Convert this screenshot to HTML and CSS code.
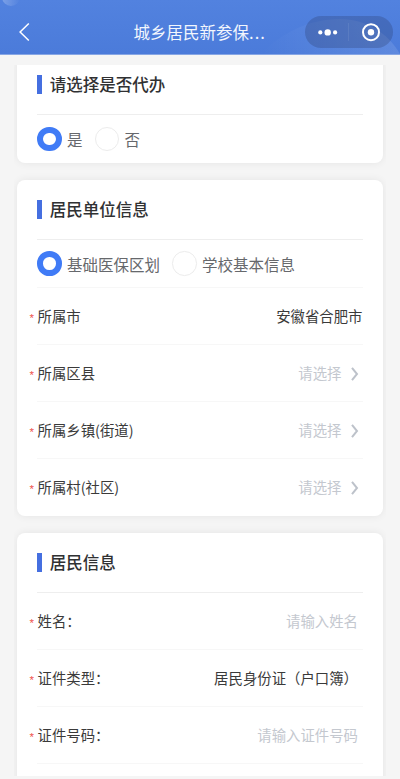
FILE: index.html
```html
<!DOCTYPE html>
<html lang="zh-CN">
<head>
<meta charset="utf-8">
<title>城乡居民新参保</title>
<link rel="stylesheet" href="styles.css">
</head>
<body>
<header class="nav">
  <svg class="nav-bg" width="400" height="54" viewBox="0 0 400 54">
    <defs>
      <linearGradient id="orb" x1="0" y1="0" x2="1" y2="0"><stop offset="0" stop-color="#fff" stop-opacity=".24"/><stop offset="1" stop-color="#fff" stop-opacity="0"/></linearGradient>
      <linearGradient id="arc" x1="0" y1="0" x2="1" y2="0"><stop offset="0" stop-color="#fff" stop-opacity="0"/><stop offset="1" stop-color="#fff" stop-opacity=".11"/></linearGradient>
    </defs>
    <circle cx="11" cy="-3" r="9" fill="url(#orb)"/>
    <path d="M261 54C280 34 308 19 340 19C366 19 388 33 400 54Z" fill="url(#arc)"/>
  </svg>
  <svg class="back" width="12" height="20" viewBox="0 0 12 20"><path d="M9.8 1.5L1.1 10l8.7 8.5" fill="none" stroke="#fff" stroke-width="1.5"/></svg>
  <h1 class="nav-title">城乡居民新参保<span class="dots">...</span></h1>
  <div class="capsule">
    <svg width="88" height="32" viewBox="0 0 88 32">
      <g fill="#fff"><circle cx="15.3" cy="16.4" r="2.1"/><circle cx="22.7" cy="16.4" r="3.2"/><circle cx="30.1" cy="16.4" r="2.1"/><circle cx="66" cy="16.2" r="3.2"/></g>
      <path d="M43.5 7v18" stroke="#fff" stroke-opacity=".08"/>
      <circle cx="66" cy="16.2" r="8" fill="none" stroke="#fff" stroke-width="2"/>
    </svg>
  </div>
</header>
<main class="scroll">
  <section class="card card-first">
    <h2 class="title"><span>请选择是否代办</span></h2>
    <div class="radios">
      <span class="radio on"></span><span class="radio-text">是</span>
      <span class="radio"></span><span class="radio-text">否</span>
    </div>
  </section>
  <section class="card">
    <h2 class="title"><span>居民单位信息</span></h2>
    <div class="radios lined">
      <span class="radio on"></span><span class="radio-text">基础医保区划</span>
      <span class="radio"></span><span class="radio-text">学校基本信息</span>
    </div>
    <div class="row"><i>*</i><span class="label">所属市</span><span class="value">安徽省合肥市</span></div>
    <div class="row"><i>*</i><span class="label">所属区县</span><span class="value hint pick">请选择</span><svg class="chev" width="8" height="14" viewBox="0 0 8 14"><path d="M1 .8L6 7l-5 6.2" /></svg></div>
    <div class="row"><i>*</i><span class="label">所属乡镇(街道)</span><span class="value hint pick">请选择</span><svg class="chev" width="8" height="14" viewBox="0 0 8 14"><path d="M1 .8L6 7l-5 6.2" /></svg></div>
    <div class="row last"><i>*</i><span class="label">所属村(社区)</span><span class="value hint pick">请选择</span><svg class="chev" width="8" height="14" viewBox="0 0 8 14"><path d="M1 .8L6 7l-5 6.2" /></svg></div>
  </section>
  <section class="card">
    <h2 class="title"><span>居民信息</span></h2>
    <div class="row"><i>*</i><span class="label">姓名：</span><span class="value hint input">请输入姓名</span></div>
    <div class="row"><i>*</i><span class="label">证件类型：</span><span class="value input">居民身份证（户口簿）</span></div>
    <div class="row"><i>*</i><span class="label">证件号码：</span><span class="value hint input">请输入证件号码</span></div>
    <div class="row"></div>
  </section>
</main>
</body>
</html>
```

FILE: styles.css
```css
* { box-sizing: border-box; }

body {
  margin: 0;
  width: 400px;
  height: 779px;
  overflow: hidden;
  background: #f5f5f5;
  font-family: "Noto Sans CJK SC", sans-serif;
  color: #3a3a3a;
}

.nav {
  position: relative;
  height: 55px;
  padding: 10px 7px 0 19px;
  display: flex;
  align-items: center;
  background: linear-gradient(#5282df, #4b7bda);
  border-bottom: 1px solid #87a6e4;
}
.nav-bg { position: absolute; left: 0; top: 0; }
.back { position: relative; flex: none; }
.nav-title {
  position: relative;
  margin: 0 0 0 102.5px;
  padding-bottom: 1px;
  font-size: 16.5px;
  line-height: 24px;
  font-weight: 400;
  color: #f2f6fd;
  white-space: nowrap;
}
.dots { letter-spacing: 1.1px; }
.capsule {
  position: relative;
  margin-left: auto;
  width: 88px;
  height: 32px;
  border-radius: 16px;
  background: rgba(40, 55, 100, .27);
}
.capsule svg { display: block; }

.scroll {
  margin: 10px 14px 0;
  height: 711px;
  padding: 0 3.3px;
  overflow: hidden;
}

.card {
  margin-bottom: 17px;
  padding: 0 20.2px;
  border-radius: 8px;
  background: #fff;
  box-shadow: 0 0 9px rgba(0, 0, 0, .07);
}
.card-first {
  margin-top: -10px;
  margin-bottom: 17.1px;
}

.title {
  display: flex;
  align-items: center;
  height: 60px;
  margin: 0;
  border-bottom: 1px solid #eee;
  font-size: 16.5px;
  font-weight: 500;
  color: #303133;
}
.title span { padding-bottom: 1px; }
.title::before {
  content: "";
  width: 4.3px;
  height: 18.5px;
  margin-right: 8px;
  background: #456fe0;
}

.radios {
  display: flex;
  align-items: center;
  height: 48px;
}
.lined { border-bottom: 1px solid #f7f7f7; }
.radio {
  width: 24.6px;
  height: 24.6px;
  border: 1px solid #ececec;
  border-radius: 50%;
}
.radio.on { border: 6.3px solid #407bf6; }
.radio-text {
  margin: 0 12.3px 0 5px;
  font-size: 15.5px;
  color: #66686c;
}

.row {
  display: flex;
  align-items: center;
  height: 57px;
  margin-left: -8px;
  font-size: 14.4px;
  background: linear-gradient(#f7f7f7, #f7f7f7) 8px 100% / 100% 1px no-repeat;
}
.last { background: none; }
.row i {
  width: 8px;
  padding-top: 2px;
  font-family: "Liberation Sans", sans-serif;
  font-size: 11.5px;
  font-style: normal;
  line-height: 16px;
  color: #ef5350;
}
.label, .value { padding-bottom: 2px; }
.value { margin-left: auto; }
.hint { color: #c4c8cf; }
.input { margin-right: 4.5px; }
.pick { margin-right: 9px; }
.chev { margin-right: 4px; flex: none; }
.chev path { fill: none; stroke: #bdc2ca; stroke-width: 2; }
```
